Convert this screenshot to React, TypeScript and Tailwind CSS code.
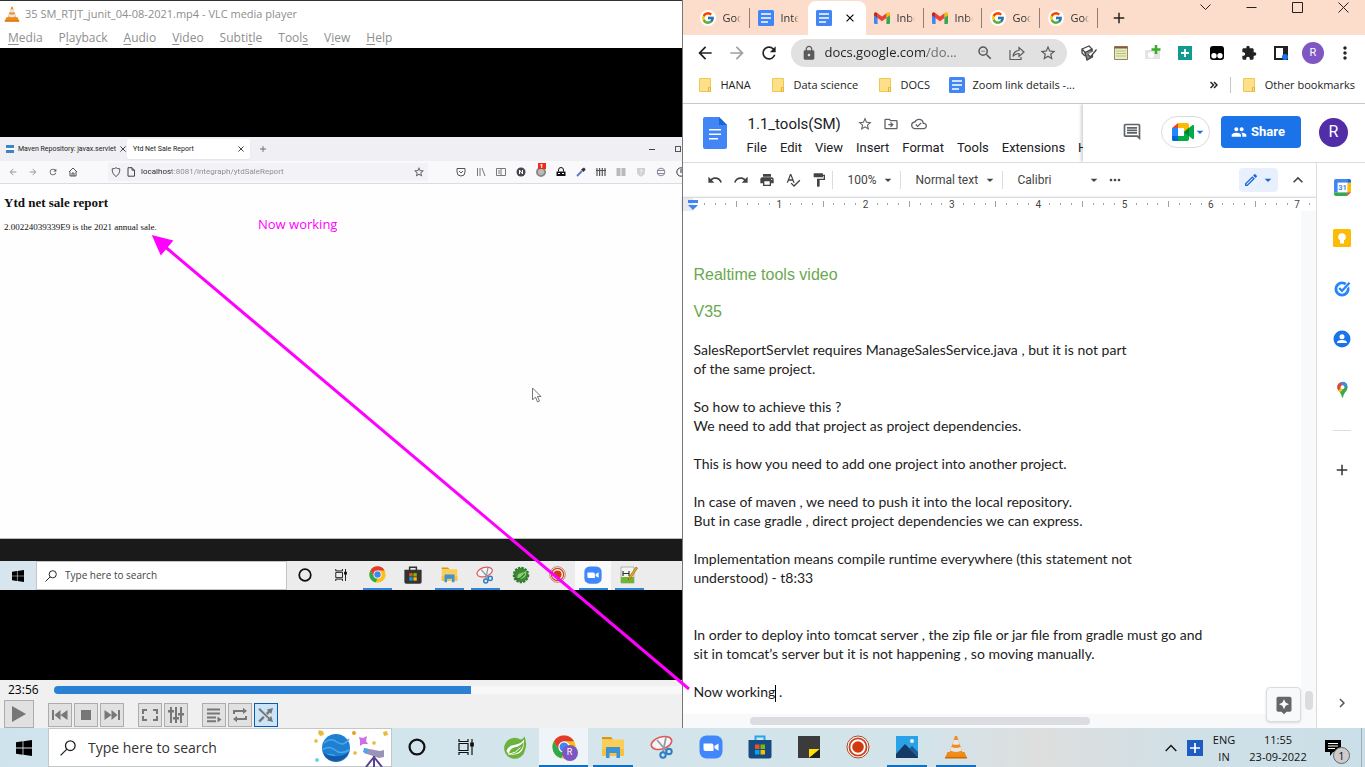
import React from "react";
import {
  MdUndo, MdRedo, MdPrint, MdSpellcheck, MdFormatPaint, MdArrowDropDown, MdMoreHoriz, MdKeyboardArrowUp,
  MdArrowBack, MdArrowForward, MdRefresh, MdLock, MdZoomOut, MdStarBorder, MdExtension, MdMoreVert,
  MdOutlineInsertComment, MdOutlineDriveFileMove, MdOutlineCloudDone, MdPeople, MdAdd, MdChevronRight,
  MdAssistant, MdOutlineEdit,
} from "react-icons/md";
import { FcGoogle } from "react-icons/fc";

type IconProps = { className?: string };
type Kids = { children?: React.ReactNode };

const ui = "font-['Open_Sans','Noto_Sans',sans-serif]";

/* ---------- shared icons ---------- */

function Cone({ className }: IconProps) {
  return (
    <svg viewBox="0 0 24 24" className={className} aria-hidden="true">
      <path d="M3.5 17h17l2.5 6H1z" fill="#ef8a12" />
      <path d="M1 22h22v1.500H1z" fill="#c96a08" />
      <path d="M11 1h2l6 18q-7 3-14 0z" fill="#f28c1c" />
      <path d="M9.700 5h4.600l1.300 4.200q-3.600 1.300-7.200 0z" fill="#e4e6ea" />
      <path d="M7.500 12q4.500 1.800 9 0l1.300 3.800q-5.800 2.200-11.600 0z" fill="#e4e6ea" />
    </svg>
  );
}

function WinLogo({ className }: IconProps) {
  return (
    <svg viewBox="0 0 16 16" className={className} fill="#000" aria-hidden="true">
      <path d="M0 2.200 6.600 1.300V7.600H0zM7.400 1.200 16 0v7.600H7.400zM0 8.400h6.600v6.300L0 13.800zM7.400 8.400H16V16l-8.600-1.200z" />
    </svg>
  );
}

function SearchGlass({ className }: IconProps) {
  return (
    <svg viewBox="0 0 16 16" className={className} fill="none" stroke="#222" strokeWidth="1.300" aria-hidden="true">
      <circle cx="10.300" cy="5.700" r="4.800" />
      <path d="M6.900 9.100.6 15.400" />
    </svg>
  );
}

function Ring({ className }: IconProps) {
  return (
    <svg viewBox="0 0 16 16" className={className} fill="none" stroke="#111" strokeWidth="2" aria-hidden="true">
      <circle cx="8" cy="8" r="6.600" />
    </svg>
  );
}

function TaskView({ className }: IconProps) {
  return (
    <svg viewBox="0 0 16 16" className={className} fill="none" stroke="#111" strokeWidth="1.200" aria-hidden="true">
      <path d="M1 0v2.500h9V0M1 16v-2.500h9V16M1 4.500h9v7H1zM14 0v16" />
      <path d="M12.800 4h2.400v3h-2.400z" fill="#111" />
    </svg>
  );
}

function Chrome({ className }: IconProps) {
  return (
    <svg viewBox="0 0 24 24" className={className} aria-hidden="true">
      <circle cx="12" cy="12" r="11.500" fill="#fbc116" />
      <path d="M12 .5A11.500 11.500 0 0 1 22 6.300H12L7 15 2 6.300A11.500 11.500 0 0 1 12 .5z" fill="#e33b2e" />
      <path d="M2 6.300 7.100 15q1.700 2.900 5 2.800l-3 5.400A11.500 11.500 0 0 1 2 6.300z" fill="#2da94f" />
      <circle cx="12" cy="12" r="5.700" fill="#fff" />
      <circle cx="12" cy="12" r="4.500" fill="#4285f4" />
    </svg>
  );
}

function Store({ className, blue }: IconProps & { blue?: boolean }) {
  return (
    <svg viewBox="0 0 24 24" className={className} aria-hidden="true">
      <path d="M7.500 6V1.500h9V6" fill="none" stroke={blue ? "#27a5e5" : "#333"} strokeWidth="2" />
      <path d="M.5 5h23v16q0 2.500-2.500 2.500H3Q.5 23.500.5 21z" fill={blue ? "#174a80" : "#333"} />
      <path d="M7 9.500h4.500V14H7z" fill="#f25022" />
      <path d="M12.500 9.500H17V14h-4.500z" fill="#7fba00" />
      <path d="M7 15h4.500v4.500H7z" fill="#00a4ef" />
      <path d="M12.500 15H17v4.500h-4.500z" fill="#ffb900" />
    </svg>
  );
}

function Explorer({ className }: IconProps) {
  return (
    <svg viewBox="0 0 24 24" className={className} aria-hidden="true">
      <path d="M1 2h9l2 2.500H1z" fill="#d9960e" />
      <path d="M1 4.500h22V21H1z" fill="#fbcf57" />
      <path d="M1 14h22v7H1z" fill="#f8c23f" />
      <path d="M5 12h14v11h-3.500v-5h-7v5H5z" fill="#3b93d9" />
    </svg>
  );
}

function Snip({ className }: IconProps) {
  return (
    <svg viewBox="0 0 24 24" className={className} fill="none" aria-hidden="true">
      <ellipse cx="11.500" cy="8" rx="10.500" ry="6" transform="rotate(-17 11.500 8)" fill="#f6f6f8" stroke="#e0595b" strokeWidth="1.600" />
      <path d="M7 5 16.500 16M16 2l-3 15" stroke="#8f9aa5" strokeWidth="1.700" />
      <circle cx="19" cy="16.500" r="2.700" stroke="#2b7fc4" strokeWidth="2" />
      <circle cx="13" cy="20" r="2.700" stroke="#2b7fc4" strokeWidth="2" />
    </svg>
  );
}

function ZoomApp({ className }: IconProps) {
  return (
    <svg viewBox="0 0 24 24" className={className} aria-hidden="true">
      <rect x=".5" y=".5" width="23" height="23" rx="7" fill="#4087fc" />
      <path d="M4.500 8.500h8q2 0 2 2v5.500h-8q-2 0-2-2zM15.500 11l4-2.600v7.400l-4-2.600z" fill="#fff" />
    </svg>
  );
}

function Recorder({ className }: IconProps) {
  return (
    <svg viewBox="0 0 24 24" className={className} aria-hidden="true">
      <circle cx="12" cy="12" r="11" fill="#fff" stroke="#a9482c" strokeWidth="1" />
      <circle cx="12" cy="12" r="8.600" fill="#fff" stroke="#c9421c" strokeWidth="1.800" />
      <circle cx="12" cy="12" r="5.800" fill="#cf3a10" />
    </svg>
  );
}

function SpringLeaf({ className }: IconProps) {
  return (
    <svg viewBox="0 0 24 24" className={className} aria-hidden="true">
      <path d="M21.500 1.500Q20 4 17.500 4.600A10.500 10.500 0 1 0 22 15Q24.500 9 21.500 1.500z" fill="#6cb33e" />
      <path d="M21 4.500q-3 4.500-9 5.200-7 .8-8.500 6.300 1 2 2.500 3.200 8.500 1.800 12.800-3.400Q21.500 11.500 21 4.500z" fill="#fff" />
      <path d="M20.500 7q-3.500 4.500-8.500 5.300Q7 13.300 6 18.500q7 1.500 11.300-3Q20.500 12 20.500 7z" fill="#6cb33e" />
      <path d="M5.500 19.500q8-1.500 12-7" stroke="#fff" fill="none" />
    </svg>
  );
}

function DarkLeaf({ className }: IconProps) {
  return (
    <svg viewBox="0 0 24 24" className={className} aria-hidden="true">
      <circle cx="12" cy="12" r="9.500" fill="#3a8a34" stroke="#2f7a2b" strokeWidth="3" strokeDasharray="3 1.500" />
      <path d="M19 6q1 9.500-6 11-4 .5-6-1.500 0-6 6-6.500 4-.5 6-3z" fill="#8fcb72" />
      <path d="M5 18q8-1 12-8" stroke="#2c6c29" strokeWidth="1.500" fill="none" />
    </svg>
  );
}

function DocsSquare({ className }: IconProps) {
  return (
    <svg viewBox="0 0 16 16" className={className} aria-hidden="true">
      <rect width="16" height="16" rx="1.500" fill="#4285f4" />
      <path d="M3 3.200h10v1.600H3zM3 7.200h10v1.600H3zM3 11.200h7v1.600H3z" fill="#fff" />
    </svg>
  );
}

function Gmail({ className }: IconProps) {
  return (
    <svg viewBox="0 0 16 12" className={className} aria-hidden="true">
      <path d="M0 2v8.900Q0 12 1.100 12h2.500V5z" fill="#4285f4" />
      <path d="M16 2v8.900q0 1.100-1.100 1.100h-2.500V5z" fill="#34a853" />
      <path d="M12.400 1.300V6L16 3.300V1.800Q16 0 14.300 0z" fill="#fbbc04" />
      <path d="M3.600 6V1.300L8 4.600l4.400-3.300V6L8 9.300z" fill="#ea4335" />
      <path d="M0 1.800v1.500L3.600 6V1.300L1.900.2Q0 0 0 1.800z" fill="#c5221f" />
    </svg>
  );
}

function GoogleDot() {
  return (
    <span className="flex size-4 shrink-0 items-center justify-center rounded-full bg-white">
      <FcGoogle className="size-3.5" />
    </span>
  );
}

function Folder() {
  return (
    <svg viewBox="0 0 12 14" className="h-3.5 w-3 shrink-0" aria-hidden="true">
      <path d="M.5.5h11v13H.5z" fill="#fee08b" stroke="#f0c84e" />
      <path d="M9.500 9.500h2v4h-2z" fill="#fee08b" stroke="#e3b730" />
    </svg>
  );
}

function Cross({ className }: IconProps) {
  return (
    <svg viewBox="0 0 10 10" className={className} fill="none" stroke="currentColor" strokeWidth="1.400" aria-hidden="true">
      <path d="m.7.7 8.600 8.600M9.300.7.7 9.300" />
    </svg>
  );
}

/* ---------- video player ---------- */

const menus: [string, string, string][] = [
  ["", "M", "edia"], ["P", "l", "ayback"], ["", "A", "udio"], ["", "V", "ideo"],
  ["Subti", "t", "le"], ["Tool", "s", ""], ["V", "i", "ew"], ["", "H", "elp"],
];

function InnerBrowser() {
  return (
    <section className="flex h-[402px] flex-col overflow-hidden border-b border-[#bbb] bg-[#fefefe]">
      <div className="flex h-6 shrink-0 items-center bg-[#f0eff3] font-[Roboto,sans-serif] text-[7px] text-[#222]">
        <button className="flex w-[127px] items-center gap-1 pl-1.5">
          <span className="flex h-2 w-2 shrink-0 items-center bg-[#3c86c8]"><i className="h-0.5 w-full bg-white" /></span>
          <span className="flex-1 text-left whitespace-nowrap">Maven Repository: javax.servlet</span>
          <Cross className="mr-2 size-1.5 shrink-0" />
        </button>
        <button className="flex h-5 w-[123px] items-center justify-between rounded-xs bg-white px-1.5 shadow-xs">
          <span>Ytd Net Sale Report</span>
          <Cross className="size-1.5" />
        </button>
        <button className="ml-2" aria-label="New tab"><MdAdd className="size-2.5 text-[#666]" /></button>
        <span className="ml-auto h-px w-1.5 bg-[#444]" />
        <span className="mr-0.5 ml-5 size-1.5 border border-[#555]" />
      </div>
      <div className="flex h-[23px] shrink-0 items-center overflow-hidden border-b border-[#dcdce0] bg-[#f9f9fb] text-[#555]">
        <div className="flex w-20 shrink-0 items-center gap-2.5 pl-2">
          <MdArrowBack className="size-2.5 text-[#999]" />
          <MdArrowForward className="size-2.5 text-[#999]" />
          <MdRefresh className="size-2.5" />
          <svg viewBox="0 0 10 10" className="size-2.5" fill="none" stroke="#555"><path d="M1 5 5 1l4 4M2 4.500V9h6V4.500M4 9V6h2v3" /></svg>
        </div>
        <div className="ml-7 flex h-[18px] min-w-0 flex-1 items-center gap-[5px] rounded-xs bg-[#f3f3f7] px-[3px]">
          <svg viewBox="0 0 10 10" className="size-2.5 shrink-0" fill="none" stroke="#555"><path d="M1.200 1.800Q4 1.800 5 .7 6 1.800 8.800 1.800 9 7 5 9.500 1 7 1.200 1.800z" /></svg>
          <svg viewBox="0 0 10 10" className="size-2.5 shrink-0" fill="none" stroke="#444"><path d="M2 .7h4l2.500 2.500v6H2zM6 .7v2.500h2.500" /></svg>
          <input aria-label="Page address" readOnly value="localhost:8081/integraph/ytdSaleReport" className="min-w-0 flex-1 bg-[linear-gradient(90deg,#222_31px,#888_31px)] bg-clip-text font-[Roboto,sans-serif] text-[8px] text-transparent outline-none" />
          <MdStarBorder className="size-3 shrink-0" />
        </div>
        <div className="ml-6 flex w-[231px] shrink-0 items-center gap-2.5 pl-1">
          <svg viewBox="0 0 10 10" className="size-2.5 shrink-0" fill="none" stroke="#555"><path d="M1 1.500h8V5Q9 9 5 9T1 5zM3 4l2 2 2-2" /></svg>
          <svg viewBox="0 0 10 10" className="size-2.5 shrink-0" fill="none" stroke="#777"><path d="M1.500 1v8M4 1v8M6 1l3 8" /></svg>
          <svg viewBox="0 0 10 10" className="size-2.5 shrink-0" fill="none" stroke="#777"><path d="M.5 1.500h9v7h-9zM5 1.500v7M2 4h2M2 6h2" /></svg>
          <svg viewBox="0 0 10 10" className="size-2.5 shrink-0"><circle cx="5" cy="5" r="4.500" fill="#45454d" /><path d="M3.500 7V3l3 4V3" stroke="#fff" fill="none" /></svg>
          <span className="relative size-2.5 shrink-0 rounded-full border-2 border-[#888] bg-[#bbb]">
            <span className="absolute -top-1.5 left-0 flex h-1.5 w-2 items-center justify-center bg-[#ee2a1c] text-[6px] leading-none font-bold text-white">1</span>
          </span>
          <svg viewBox="0 0 10 10" className="size-2.5 shrink-0"><path d="M2.500 4.500V3a2.500 2.500 0 0 1 5 0v1.500" fill="none" stroke="#111" /><path d="M.5 4.500h9V9h-9z" fill="#111" /><path d="M2 6.500h2M6 6.500h2" stroke="#fff" /></svg>
          <svg viewBox="0 0 10 10" className="size-2.5 shrink-0"><path d="M1 9 6 4" stroke="#5577c8" strokeWidth="1.800" /><path d="M5 2.500 7.500 5 9.700 2.500 8 .5z" fill="#333" /></svg>
          <svg viewBox="0 0 10 10" className="size-2.5 shrink-0" stroke="#555" strokeWidth="1.200"><path d="M1 1v8M3.600 1v8M6.300 1v8M9 1v8M0 3.500h10" /></svg>
          <svg viewBox="0 0 10 10" className="size-2.5 shrink-0" fill="#b9b9bd"><path d="M.5 1h4v8h-4zM5.500 1h4v8h-4z" /></svg>
          <svg viewBox="0 0 10 10" className="size-2.5 shrink-0" fill="#cfcfd4"><path d="M1 1h8v4Q9 8 5 9.700 1 8 1 5z" /><path d="M3.800 3.500q1.200-1.500 2.400 0 .2 1-1.200 1.700v.8M5 7v1" stroke="#fff" strokeWidth=".8" /></svg>
          <svg viewBox="0 0 10 10" className="size-2.5 shrink-0" fill="none" stroke="#889"><circle cx="5" cy="5" r="3.800" /><path d="M1 3.500h8M1 6.500h8" /></svg>
          <svg viewBox="0 0 10 10" className="size-2.5 shrink-0" fill="none" stroke="#333"><circle cx="5" cy="5" r="4.200" /><path d="M5 2v4" /></svg>
        </div>
      </div>
      <div className="px-1 pt-[11px] font-['Liberation_Serif',serif] text-[#111]">
        <h1 className="text-[13px] leading-4 font-bold">Ytd net sale report</h1>
        <p className="pt-2.5 text-[9px] leading-3">2.00224039339E9 is the 2021 annual sale.</p>
      </div>
    </section>
  );
}

function InnerCell({ children, line, on, label }: Kids & { line?: boolean; on?: boolean; label: string }) {
  return (
    <button aria-label={label} className={"flex w-9 flex-col items-center " + (on ? "bg-[#fafafa]" : "")}>
      <span className="flex flex-1 items-center">{children}</span>
      <span className={"h-0.5 w-[29px] " + (line ? "bg-[#2f86d8]" : "")} />
    </button>
  );
}

function InnerTaskbar() {
  return (
    <div className={"flex h-[29px] bg-[#ececec] " + ui}>
      <button aria-label="Start" className="flex w-9 items-center justify-center bg-[#d7e5ef]"><WinLogo className="size-3" /></button>
      <label className="flex w-[251px] items-center gap-2 border border-[#c5c5c5] bg-white pl-2">
        <SearchGlass className="size-3 shrink-0" />
        <input aria-label="Search the recorded desktop" placeholder="Type here to search" className="min-w-0 flex-1 bg-transparent text-[10px] outline-none placeholder:text-[#444]" />
      </label>
      <InnerCell label="Cortana"><Ring className="size-3.5" /></InnerCell>
      <InnerCell label="Task view"><TaskView className="size-3" /></InnerCell>
      <InnerCell label="Chrome" line><Chrome className="size-[17px]" /></InnerCell>
      <InnerCell label="Store"><Store className="size-[18px]" /></InnerCell>
      <InnerCell label="Files" line><Explorer className="size-[17px]" /></InnerCell>
      <InnerCell label="Snip" line><Snip className="size-[18px]" /></InnerCell>
      <InnerCell label="Spring Tool Suite"><DarkLeaf className="size-[18px]" /></InnerCell>
      <InnerCell label="Recorder"><Recorder className="size-[17px]" /></InnerCell>
      <InnerCell label="Zoom" line on><ZoomApp className="size-[18px]" /></InnerCell>
      <InnerCell label="Editor" line>
        <svg viewBox="0 0 18 18" className="size-[18px]">
          <path d="M1 1h13v16H1z" fill="#f4f6ee" stroke="#999" strokeWidth=".7" />
          <path d="M1 11h13v6H1z" fill="#6fb52d" /><path d="M3 5v5M3 7.500h6M9 5v5" stroke="#333" strokeWidth="1.200" />
          <path d="m8 14 1-3 7-10 1.500 1L11 12z" fill="#e8a723" stroke="#8a5a10" strokeWidth=".6" />
        </svg>
      </InnerCell>
    </div>
  );
}

function PlayerButton({ children, label, on }: Kids & { label: string; on?: boolean }) {
  return (
    <button aria-label={label} className={"flex size-6 items-center justify-center border " + (on ? "border-[#0b5cad] bg-[#cce4f7]" : "border-[#adadad] bg-[#e1e1e1]")}>
      <svg viewBox="0 0 16 16" className="size-4" fill="#777" stroke="none">{children}</svg>
    </button>
  );
}

function Player() {
  return (
    <section className="flex min-w-0 flex-col overflow-hidden border-t border-[#333] bg-black">
      <header className={"h-[47px] shrink-0 bg-white text-[#8e8e8e] " + ui}>
        <div className="flex h-[26px] items-center gap-[5px] pl-1 text-[11px]">
          <Cone className="size-4" />
          <h2>35 SM_RTJT_junit_04-08-2021.mp4 - VLC media player</h2>
        </div>
        <nav className="flex h-[21px] items-center gap-4 pl-2 text-[12px]">
          {menus.map(([a, b, c]) => (
            <button key={a + b + c}>{a}<u className="underline-offset-2">{b}</u>{c}</button>
          ))}
        </nav>
      </header>
      <div className="flex flex-1 flex-col pt-[89px]">
        <InnerBrowser />
        <div className="h-[22px] bg-[#1a1a1a]" />
        <InnerTaskbar />
      </div>
      <footer className="h-12 shrink-0 bg-[#f0f0f0]">
        <div className={"flex h-5 items-center pl-2 text-[12px] text-black " + ui}>
          <span className="w-[46px]">23:56</span>
          <input type="range" aria-label="Playback position" defaultValue={66} className="h-2 flex-1 appearance-none rounded-l-full bg-[#dcdcdc] bg-[linear-gradient(90deg,#2a81d3_66.3%,#f8f8f8_66.3%)] [&::-webkit-slider-thumb]:size-0 [&::-webkit-slider-thumb]:appearance-none" />
        </div>
        <div className="flex items-end gap-3.5 pl-1">
          <button aria-label="Play" className="flex h-7 w-[30px] items-center justify-center border border-[#adadad] bg-[#e1e1e1]">
            <svg viewBox="0 0 16 16" className="size-4" fill="#777"><path d="M1 0v16l14-8z" /></svg>
          </button>
          <div className="flex gap-0.5 pb-px">
            <PlayerButton label="Previous"><path d="M0 3h2v10H0zM8.500 3v10L2.500 8zM15.500 3v10l-7-5z" /></PlayerButton>
            <PlayerButton label="Stop"><path d="M3 3h10v10H3z" /></PlayerButton>
            <PlayerButton label="Next"><path d="M14 3h2v10h-2zM7.500 3v10l6-5zM.5 3v10l7-5z" /></PlayerButton>
          </div>
          <div className="flex gap-0.5 pb-px">
            <PlayerButton label="Full screen"><path d="M0 2h5v2H2v3H0zM11 2h5v5h-2V4h-3zM0 9h2v3h3v2H0zM14 9h2v5h-5v-2h3z" /></PlayerButton>
            <PlayerButton label="Extended settings"><path d="M2 0h2v16H2zM7 0h2v16H7zM12 0h2v16h-2zM0 3h6v2.500H0zM5 10h6v2.500H5zM10 6h6v2.500h-6z" /></PlayerButton>
          </div>
          <div className="flex gap-0.5 pb-px">
            <PlayerButton label="Playlist"><path d="M1 1.500h13v2H1zM1 5.500h13v2H1zM1 9.500h9v2H1zM1 13.200h9v2H1zM11.500 9.500v6l4-3z" /></PlayerButton>
            <PlayerButton label="Loop"><path d="M1 7V3h10V.7L15 4l-4 3V5H3v2zM15 9v4H5v2.300L1 12l4-3v2h8V9z" /></PlayerButton>
            <PlayerButton label="Random" on><path d="m1.800 1 9.700 9.700 1.700-1.700L15 15l-6-1.600 1.300-1.300L.3 2.500zM2 15.500l4.700-4.700L5 9 .3 13.700zM8 6l2-2L8.800 2.600 15 1l-1.700 6L12 5.500 9.500 8z" /></PlayerButton>
          </div>
        </div>
      </footer>
    </section>
  );
}

/* ---------- browser ---------- */

function Tab({ icon, text, sep }: { icon: React.ReactNode; text: string; sep?: boolean }) {
  return (
    <button className="flex h-[34px] w-[58px] items-center gap-[7px] pl-2">
      {icon}
      <span className="w-[18px] overflow-hidden text-left whitespace-nowrap text-[#333] [mask-image:linear-gradient(90deg,#000_70%,transparent)]">{text}</span>
      <span className={"ml-auto h-5 w-px " + (sep ? "bg-[#917f76]" : "")} />
    </button>
  );
}

function TabStrip() {
  return (
    <div className={"flex h-[35px] shrink-0 items-end bg-[#fcdcca] pl-[9px] text-[11px] " + ui}>
      <Tab icon={<GoogleDot />} text="Goo" sep />
      <Tab icon={<DocsSquare className="size-4 shrink-0" />} text="Inte" />
      <button aria-label="1.1_tools(SM)" className="flex h-[34px] w-[58px] items-center justify-between rounded-t-lg bg-white px-2 text-black">
        <DocsSquare className="size-4" />
        <Cross className="mr-1 size-2" />
      </button>
      <Tab icon={<Gmail className="h-3 w-4 shrink-0" />} text="Inbo" sep />
      <Tab icon={<Gmail className="h-3 w-4 shrink-0" />} text="Inbo" sep />
      <Tab icon={<GoogleDot />} text="Goo" sep />
      <Tab icon={<GoogleDot />} text="Goo" sep />
      <button aria-label="New tab" className="ml-3 flex h-[34px] items-center"><MdAdd className="size-[18px] text-[#222]" /></button>
      <div className="mr-4 ml-auto flex h-[35px] items-start gap-[35px] pt-[2px] text-[#222]">
        <svg viewBox="0 0 11 11" className="size-[11px]" fill="none" stroke="currentColor"><path d="m.5 2.500 5 5 5-5" /></svg>
        <svg viewBox="0 0 11 11" className="size-[11px]" fill="none" stroke="currentColor"><path d="M.5 5.500h10" /></svg>
        <svg viewBox="0 0 11 11" className="size-[11px]" fill="none" stroke="currentColor"><path d="M.5.5h10v10H.5z" /></svg>
        <svg viewBox="0 0 11 11" className="size-[11px]" fill="none" stroke="currentColor"><path d="m.5.5 10 10m0-10-10 10" /></svg>
      </div>
    </div>
  );
}

function Ext({ children, label }: Kids & { label: string }) {
  return <button aria-label={label} className="flex w-8 shrink-0 items-center justify-center">{children}</button>;
}

function AddressBar() {
  return (
    <div className="flex h-9 shrink-0 items-center bg-white pr-1 pl-1.5 text-[#222]">
      <Ext label="Back"><MdArrowBack className="size-5" /></Ext>
      <Ext label="Forward"><MdArrowForward className="size-5 text-[#a0a0a0]" /></Ext>
      <Ext label="Reload"><MdRefresh className="size-5" /></Ext>
      <div className="ml-1.5 flex h-7 min-w-0 flex-1 items-center rounded-full bg-[#e1e1e1] px-2.5 text-[#5a5a5a]">
        <MdLock className="size-4 shrink-0" />
        <input aria-label="Address" readOnly value="docs.google.com/do..." className={"ml-2 min-w-0 flex-1 bg-[linear-gradient(90deg,#202124_102px,#6b6b6b_102px)] bg-clip-text text-[13px] text-transparent outline-none " + ui} />
        <MdZoomOut className="size-[18px] shrink-0" />
        <svg viewBox="0 0 16 16" className="ml-[15px] size-4 shrink-0" fill="none" stroke="#5a5a5a" strokeWidth="1.200"><path d="M1 5v9.500h11V12M4 11.500Q4.500 6 10 5.500V2.500l5 4.500-5 4.500V8.500Q6 8.500 4 11.500z" /></svg>
        <MdStarBorder className="ml-3.5 size-[18px] shrink-0" />
      </div>
      <div className="ml-1.5 flex shrink-0">
        <Ext label="Notes"><svg viewBox="0 0 16 16" className="size-4" fill="#fff" stroke="#444" strokeWidth="1.300"><path d="M3.500 6 11 4.500 11.500 12 6 15z" fill="#888" /><path d="m1 4 7-3 3 3-7 3.500zM1 4v4l3 3M7 9.500l2.500 2.500 6-7.500" /></svg></Ext>
        <Ext label="Notepad"><svg viewBox="0 0 14 14" className="size-3.5"><path d="M.5.5h13v13H.5z" fill="#e8eec1" stroke="#9a8360" /><path d="M.5.5h13v2H.5z" fill="#8a5a3a" /><path d="M2 5h10M2 7.500h10M2 10h10" stroke="#b1bf7e" /></svg></Ext>
        <Ext label="Capture"><svg viewBox="0 0 16 16" className="size-4"><path d="M0 5h15v9H0z" fill="#e4e4e4" /><circle cx="6" cy="10" r="3" fill="#fff" /><path d="M11 0v9M6.500 4.500h9" stroke="#3aae2b" strokeWidth="2.600" /></svg></Ext>
        <Ext label="Add"><svg viewBox="0 0 14 14" className="size-3.5"><path d="M0 0h14v14H0z" fill="#119a92" /><path d="M7 3v8M3 7h8" stroke="#fff" strokeWidth="1.800" /></svg></Ext>
        <Ext label="Scripts"><svg viewBox="0 0 14 14" className="size-3.5"><rect width="14" height="14" rx="3" fill="#000" /><circle cx="4" cy="9.700" r="2.700" fill="#fff" /><circle cx="10" cy="9.700" r="2.700" fill="#fff" /></svg></Ext>
        <Ext label="Extensions"><MdExtension className="size-4" /></Ext>
        <Ext label="Side panel"><svg viewBox="0 0 14 14" className="size-3.5"><path d="M1 1h12v12H1z" fill="#fff" stroke="#222" strokeWidth="2" /><path d="M9 0h5v14H9z" fill="#222" /><circle cx="11" cy="11" r="3" fill="#1a73e8" /></svg></Ext>
        <Ext label="Profile"><span className="flex size-[22px] items-center justify-center rounded-full bg-[#7e57c2] font-[Roboto,sans-serif] text-[11px] text-white">R</span></Ext>
        <Ext label="Menu"><MdMoreVert className="size-5" /></Ext>
      </div>
    </div>
  );
}

function Bookmarks() {
  return (
    <div className={"flex h-[33px] shrink-0 items-center border-b border-[#c8c8c8] bg-white pr-2.5 pb-1 pl-4 text-[11px] whitespace-nowrap text-[#222] " + ui}>
      <button className="flex w-[73px] items-center gap-2.5"><Folder />HANA</button>
      <button className="flex w-[107px] items-center gap-2.5"><Folder />Data science</button>
      <button className="flex w-[70px] items-center gap-2.5"><Folder />DOCS</button>
      <button className="flex items-center gap-2"><DocsSquare className="size-4" />Zoom link details -...</button>
      <button className="ml-auto" aria-label="More bookmarks"><svg viewBox="0 0 8 8" className="size-2" fill="none" stroke="#222" strokeWidth="1.500"><path d="m.5 1 3 3-3 3m3.500-6 3 3-3 3" /></svg></button>
      <span className="mx-3 h-4 w-px bg-[#c5c5c5]" />
      <button className="flex items-center gap-2.5"><Folder />Other bookmarks</button>
    </div>
  );
}

/* ---------- document editor ---------- */

function DocsHeader() {
  return (
    <header className="flex h-[59px] shrink-0 border-b border-[#dadce0] bg-white font-[Roboto,sans-serif] text-[#202124]">
      <div className="flex min-w-0 flex-1 overflow-hidden pl-5">
        <svg viewBox="0 0 24 32" className="mt-[13px] h-8 w-6 shrink-0">
          <path d="M2 0h14l8 8v22q0 2-2 2H2q-2 0-2-2V2q0-2 2-2z" fill="#4285f4" /><path d="m16 0 8 8h-8z" fill="#1967d2" />
          <path d="M6 12h12v1.500H6zM6 16.500h12V18H6zM6 21h9v1.500H6z" fill="#fff" />
        </svg>
        <div className="ml-5 whitespace-nowrap">
          <div className="flex h-8 items-center pt-2">
            <h1 className="pl-px text-[15px]">1.1_tools(SM)</h1>
            <button aria-label="Star" className="ml-4"><MdStarBorder className="size-4 text-[#5f6368]" /></button>
            <button aria-label="Move" className="ml-2.5"><MdOutlineDriveFileMove className="size-4 text-[#5f6368]" /></button>
            <button aria-label="Saved to Drive" className="ml-3"><MdOutlineCloudDone className="size-4 text-[#5f6368]" /></button>
          </div>
          <nav className="flex h-6 items-center gap-[13px] text-[13px]">
            {["File", "Edit", "View", "Insert", "Format", "Tools", "Extensions", "Help"].map((m) => <button key={m}>{m}</button>)}
          </nav>
        </div>
      </div>
      <div className="flex w-[282px] shrink-0 items-center pb-0.5 pl-[39px] shadow-[-2px_0_3px_rgba(0,0,0,.18)] [clip-path:inset(0_0_0_-6px)]">
        <button aria-label="Comments"><MdOutlineInsertComment className="size-5 text-[#5f6368]" /></button>
        <button aria-label="Join a call" className="ml-[19px] flex h-8 w-[49px] items-center rounded-full border border-[#dadce0] pl-2.5">
          <svg viewBox="0 0 22 18" className="h-[18px] w-[22px] shrink-0">
            <path d="M0 5h6v8H0z" fill="#2684fc" /><path d="M0 13h6v5H1.500Q0 18 0 16.500z" fill="#0066da" /><path d="m6 0-6 5h6z" fill="#ea4335" />
            <path d="M6 0h9q2 0 2 2v5l-5 2V5H6z" fill="#ffba00" /><path d="M6 13h6V9l5 1v6q0 2-2 2H6z" fill="#00ac47" />
            <path d="m12 9 8.500-7q1.500-.5 1.500 1v12q0 1.500-1.500 1z" fill="#00ac47" /><path d="m12 9 5-4.200v8.400z" fill="#00832d" />
          </svg>
          <MdArrowDropDown className="-ml-0.5 size-4 shrink-0 text-[#1a73e8]" />
        </button>
        <button className="ml-[11px] flex h-8 w-20 items-center gap-1 rounded-sm bg-[#1a73e8] pl-2.5 text-[13px] font-bold text-white"><MdPeople className="size-4" />Share</button>
        <span className="ml-[18px] flex size-[29px] items-center justify-center rounded-full bg-[#512da8] text-[16px] text-white">R</span>
      </div>
    </header>
  );
}

function Sep() {
  return <span className="h-[18px] w-px bg-[#dadce0]" />;
}

function Tool({ children, label }: Kids & { label: string }) {
  return <button aria-label={label} className="flex w-[26px] items-center justify-center [&>svg]:size-4">{children}</button>;
}

function EditToolbar() {
  return (
    <div className="flex h-[34px] shrink-0 items-center bg-white pl-[19px] font-[Roboto,sans-serif] text-[12px] text-[#444]">
      <Tool label="Undo"><MdUndo /></Tool>
      <Tool label="Redo"><MdRedo /></Tool>
      <Tool label="Print"><MdPrint /></Tool>
      <Tool label="Spelling"><MdSpellcheck /></Tool>
      <Tool label="Paint format"><MdFormatPaint /></Tool>
      <Sep />
      <button className="flex w-[67px] items-center justify-between pr-1 pl-[15px]">100%<MdArrowDropDown className="size-4" /></button>
      <Sep />
      <button className="flex w-[101px] items-center justify-between pr-1 pl-[15px]">Normal text<MdArrowDropDown className="size-4" /></button>
      <Sep />
      <button className="flex w-[99px] items-center justify-between pl-[15px]">Calibri<MdArrowDropDown className="size-4" /></button>
      <Tool label="More"><MdMoreHoriz /></Tool>
      <button aria-label="Editing mode" className="ml-auto flex h-6 w-[39px] items-center justify-between rounded-sm bg-[#e8f0fe] pr-0.5 pl-1 text-[#1967d2]"><MdOutlineEdit className="size-4" /><MdArrowDropDown className="size-4" /></button>
      <span className="ml-1"><Sep /></span>
      <button aria-label="Hide menus" className="mr-2 ml-1.5"><MdKeyboardArrowUp className="size-5" /></button>
    </div>
  );
}

const inches = [1, 2, 3, 4, 5, 6, 7];
const eighths = Array.from({ length: 58 }, (_, i) => i + 1).filter((i) => i % 8 !== 0);

function Ruler() {
  return (
    <div className="h-3.5 shrink-0 overflow-hidden border-t border-[#dadce0] bg-white shadow-[0_1px_3px_rgba(60,64,67,.35)]">
      <svg width="633" height="13" viewBox="0 0 633 13">
        <path d="M0 0h10v13H0z" fill="#e8eaed" />
        {eighths.map((i) => (
          <path key={i} d={`M${Math.round(10 + i * 10.8) + 0.5} ${i % 4 === 0 ? 3 : 5}v${i % 4 === 0 ? 6 : 2}`} stroke="#a0a3a8" />
        ))}
        {inches.map((n) => (
          <text key={n} x={10 + n * 86.3} y="10" textAnchor="middle" fontSize="10" fontFamily="Roboto" fill="#444">{n}</text>
        ))}
        <path d="M5 2h10v3H5zM5 7h10l-5 5z" fill="#4285f4" />
      </svg>
    </div>
  );
}

function Page() {
  return (
    <div className="relative flex flex-1 flex-col bg-[#f8f9fa]">
      <div className="flex flex-1">
        <article className="flex-1 bg-white pt-[52px] pl-[11px] font-[Lato,Carlito,sans-serif] text-[14px] leading-[19px] text-[#222]">
          <h2 className="font-['Liberation_Sans',sans-serif] text-[16px] leading-6 text-[#6aa84f]">Realtime tools video</h2>
          <h2 className="pt-[13px] font-['Liberation_Sans',sans-serif] text-[16px] leading-6 text-[#6aa84f]">V35</h2>
          <div className="flex flex-col gap-[19px] pt-4 whitespace-nowrap">
            <p>SalesReportServlet requires ManageSalesService.java , but it is not part<br />of the same project.</p>
            <p>So how to achieve this ?<br />We need to add that project as project dependencies.</p>
            <p>This is how you need to add one project into another project.</p>
            <p>In case of maven , we need to push it into the local repository.<br />But in case gradle , direct project dependencies we can express.</p>
            <p>Implementation means compile runtime everywhere (this statement not<br />understood) - t8:33</p>
            <p className="pt-[19px]">In order to deploy into tomcat server , the zip file or jar file from gradle must go and<br />sit in tomcat’s server but it is not happening , so moving manually.</p>
            <p>Now working<span className="-mr-px inline-block h-[17px] w-px bg-black align-middle" /> .</p>
          </div>
        </article>
        <div className="flex w-[15px] flex-col items-center justify-end pb-1"><span className="h-[19px] w-2 rounded-full bg-[#dadce0]" /></div>
      </div>
      <div className="flex h-3.5 items-center pl-[67px]"><span className="h-2 w-[340px] rounded-full bg-[#dadce0]" /></div>
      <button aria-label="Explore" className="absolute right-[15px] bottom-1.5 flex size-[35px] items-center justify-center rounded-sm border border-[#dadce0] bg-[#f8f9fa] shadow-sm"><MdAssistant className="size-5 text-[#666]" /></button>
    </div>
  );
}

function SidePanel() {
  return (
    <aside className="flex w-[49px] shrink-0 flex-col items-center border-l border-[#dadce0] bg-white pt-4 pl-0.5">
      <div className="flex flex-col items-center gap-[33px]">
        <svg viewBox="0 0 18 18" className="size-[17px]">
          <path d="M0 2q0-2 2-2h12v4H4v10H0z" fill="#4285f4" /><path d="M14 0h2q2 0 2 2v2h-4z" fill="#1967d2" /><path d="M14 4h4v10h-4z" fill="#fbbc04" />
          <path d="M0 14h14v4H2q-2 0-2-2z" fill="#34a853" /><path d="M14 14h4l-4 4z" fill="#ea4335" /><path d="M4 4h10v10H4z" fill="#fff" />
          <text x="9" y="12" textAnchor="middle" fontSize="8" fontFamily="Roboto" fontWeight="700" fill="#4285f4">31</text>
        </svg>
        <svg viewBox="0 0 18 18" className="size-[18px]"><rect width="18" height="18" rx="1.500" fill="#fbbc04" /><circle cx="9" cy="8" r="3.800" fill="#fff" /><path d="M7 11h4v3.500H7z" fill="#fff" /></svg>
        <svg viewBox="0 0 18 18" className="size-[17px]" fill="none"><circle cx="8.500" cy="9.500" r="6.500" stroke="#2684fc" strokeWidth="3" /><path d="m5.500 8.500 3 3L16.500 3" stroke="#fff" strokeWidth="4" /><path d="m5.500 8.500 3 3L16.500 3" stroke="#2684fc" strokeWidth="2.400" /></svg>
        <svg viewBox="0 0 18 18" className="size-[18px]"><circle cx="9" cy="9" r="8.500" fill="#1a73e8" /><circle cx="9" cy="6.800" r="2.500" fill="#fff" /><path d="M4 13q0-3 5-3t5 3z" fill="#fff" /></svg>
        <svg viewBox="0 0 18 18" className="size-[17px]">
          <path d="M3.500 6.500A5.500 5.500 0 0 1 14.500 6.500Q14.500 9 11.500 12.500 10 14.500 9.700 17q-.7 1.500-1.400 0Q8 14.500 6.500 12.500 3.500 9 3.500 6.500z" fill="#34a853" />
          <path d="M3.500 6.500A5.500 5.500 0 0 1 7.500 1.200L11 3.500 4.800 10Q3.500 8.200 3.500 6.500z" fill="#ea4335" />
          <path d="M7.500 1.200a5.500 5.500 0 0 1 6.500 3L9 9z" fill="#4285f4" /><path d="m4.800 10 3-3.500 3 1-4.300 5z" fill="#fbbc04" /><circle cx="9" cy="6.500" r="2" fill="#fff" />
        </svg>
      </div>
      <span className="mt-8 h-px w-[18px] bg-[#dadce0]" />
      <button aria-label="Get add-ons" className="mt-[30px]"><MdAdd className="size-[18px] text-[#333]" /></button>
      <button aria-label="Hide side panel" className="mt-auto mb-4"><MdChevronRight className="size-[18px] text-[#555]" /></button>
    </aside>
  );
}

/* ---------- taskbar ---------- */

function Cell({ children, line, on, label }: Kids & { line?: boolean; on?: boolean; label: string }) {
  return (
    <button aria-label={label} className={"flex w-[49px] shrink-0 flex-col items-center " + (on ? "bg-[#eef4f7]" : "")}>
      <span className="flex flex-1 items-center">{children}</span>
      <span className={"h-0.5 " + (on ? "w-full " : "w-10 ") + (line ? "bg-[#0f6fc0]" : "")} />
    </button>
  );
}

function SpaceArt() {
  return (
    <svg viewBox="0 0 78 38" className="h-[38px] w-[78px] shrink-0" aria-hidden="true">
      <circle cx="23" cy="19" r="14" fill="#1f7fd1" />
      <path d="M11 14q6-6 13-1t12-3M9 21q7-5 13 0t14 0M12 27q6-3 11 1t9 0" stroke="#4aa9ea" strokeWidth="1.500" fill="none" />
      <path d="M10 24a14 14 0 0 0 26-1q-10 8-26 1z" fill="#1259a8" />
      <path d="m6 1 4 1 1 4-4 1-2-3zM2 10l3 1-1 3-3-1zM70 3l4-1 1 4-4 1zM41 22l3 1-1 3-3-1zM60 12l3 1-1 3-3-1z" fill="#eab83b" />
      <circle cx="41" cy="4" r="2" fill="#f39a1c" /><circle cx="4" cy="31" r="2" fill="#6cd4e6" />
      <path d="m46 8 4 1 4-2-1 5 2 3-5 0-3 2 0-5z" fill="#cf6fe6" />
      <path d="m51 19 16 3 4-1v7l-5 1-15-5z" fill="#9a93b8" /><path d="m51 19 4 1-1 5-4-2z" fill="#4ea8e6" />
      <path d="M61 27v11M61 28l-8 10M61 28l8 10" stroke="#56428f" strokeWidth="2" />
    </svg>
  );
}

function Taskbar() {
  return (
    <footer className={"flex h-[39px] shrink-0 bg-[linear-gradient(90deg,#cfe3ec_0%,#d4e5ec_40%,#d3e3ea_68%,#dddedd_76%,#cfe0e7_88%,#cbdfe8_100%)] text-[#111] " + ui}>
      <button aria-label="Start" className="flex w-12 shrink-0 items-center justify-center"><WinLogo className="size-4" /></button>
      <label className="flex w-[344px] shrink-0 items-center border border-[#c2c7ca] bg-white pl-[11px]">
        <SearchGlass className="size-4 shrink-0" />
        <input aria-label="Search" placeholder="Type here to search" className="ml-3 min-w-0 flex-1 bg-transparent text-[14px] outline-none placeholder:text-[#333]" />
        <SpaceArt />
      </label>
      <Cell label="Cortana"><Ring className="size-[18px]" /></Cell>
      <Cell label="Task view"><TaskView className="size-4" /></Cell>
      <Cell label="Spring"><SpringLeaf className="size-6" /></Cell>
      <Cell label="Chrome" line on>
        <span className="relative"><Chrome className="size-6" /><span className="absolute top-2.5 left-2.5 flex size-4 items-center justify-center rounded-full bg-[#7e57c2] font-[Roboto,sans-serif] text-[9px] text-white">R</span></span>
      </Cell>
      <Cell label="Files" line><Explorer className="size-6" /></Cell>
      <Cell label="Snip"><Snip className="size-6" /></Cell>
      <Cell label="Zoom"><ZoomApp className="size-6" /></Cell>
      <Cell label="Store"><Store blue className="size-6" /></Cell>
      <Cell label="Sticky Notes"><svg viewBox="0 0 22 24" className="h-6 w-[22px]"><path d="M0 1h22v22H0z" fill="#3b3b3b" /><path d="M11 23v-9h11z" fill="#ffe100" /><path d="M11 23 22 14v9z" fill="#222" /></svg></Cell>
      <Cell label="Recorder"><Recorder className="size-6" /></Cell>
      <Cell label="Photos" line><svg viewBox="0 0 22 24" className="h-6 w-[22px]"><path d="M0 1h22v22H0z" fill="#2aa2e8" /><path d="M0 19 9 9l13 13v1H0z" fill="#153a66" /><path d="m13 14 3-3 6 6v5z" fill="#1f5c96" /><circle cx="16" cy="6" r="2" fill="#eaf6ff" /></svg></Cell>
      <Cell label="VLC" line><Cone className="size-6" /></Cell>
      <div className="ml-auto flex items-center text-[11px] leading-[17px]">
        <svg viewBox="0 0 12 8" className="h-2 w-3" fill="none" stroke="#111" strokeWidth="1.300"><path d="m.7 7 5.300-5.500L11.300 7" /></svg>
        <svg viewBox="0 0 16 16" className="ml-2.5 size-4"><path d="M0 0h16v16H0z" fill="#1d5cc0" /><path d="M8 3v10M3 8h10" stroke="#fff" strokeWidth="1.700" /></svg>
        <button className="ml-1.5 w-[30px] text-center">ENG<br />IN</button>
        <button className="ml-2 w-[62px] text-center whitespace-nowrap">11:55<br />23-09-2022</button>
        <button aria-label="Notifications" className="relative mr-3 ml-4 flex h-full w-6 items-center">
          <svg viewBox="0 0 16 16" className="size-4"><path d="M0 0h16v12H8l-3 4v-4H0z" fill="#000" /><path d="M3 3.500h10M3 6h10M3 8.500h7" stroke="#fff" /></svg>
          <span className="absolute top-[19px] left-2 flex size-[17px] items-center justify-center rounded-full border border-[#666] bg-[#ccc] text-[11px]">1</span>
        </button>
        <span className="mr-[3px] h-full w-px bg-[#9fb0b8]" />
      </div>
    </footer>
  );
}

/* ---------- annotations drawn over the desktop ---------- */

function Annotations() {
  return (
    <>
      <p className={"absolute top-[214px] left-[258px] text-[13px] leading-5 text-[#ff00ff] " + ui}>Now working</p>
      <svg width="700" height="700" viewBox="0 0 700 700" className="pointer-events-none absolute top-0 left-0" aria-hidden="true">
        <path d="M689 689 163 245" stroke="#f0f" strokeWidth="3" />
        <path d="m153 236 8 18 11-13z" fill="#f0f" stroke="#f0f" strokeWidth="1.500" />
        <path d="M532.500 388v12l3-3 2 5 2-1-2-4.500h3.500z" fill="#fff" stroke="#777" />
      </svg>
    </>
  );
}

export default function App() {
  return (
    <main className="relative flex min-h-screen flex-col overflow-hidden">
      <div className="grid flex-1 grid-cols-2">
        <Player />
        <section className="z-0 flex min-w-0 flex-col shadow-[-1px_0_0_#777]">
          <TabStrip />
          <AddressBar />
          <Bookmarks />
          <DocsHeader />
          <div className="flex flex-1">
            <div className="flex min-w-0 flex-1 flex-col">
              <EditToolbar />
              <Ruler />
              <Page />
            </div>
            <SidePanel />
          </div>
        </section>
      </div>
      <Taskbar />
      <Annotations />
    </main>
  );
}
